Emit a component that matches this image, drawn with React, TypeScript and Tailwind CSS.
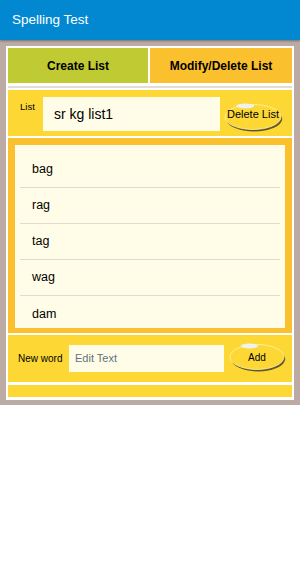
const words = ['bag', 'rag', 'tag', 'wag', 'dam'];

const OvalShape = ({ w, h }: { w: number; h: number }) => (
  <svg
    className="absolute inset-0"
    width={w}
    height={h}
    viewBox={`0 0 ${w} ${h}`}
  >
    <ellipse
      cx={w / 2 + 1.2}
      cy={h / 2 + 2}
      rx={w / 2 - 2}
      ry={h / 2 - 2.5}
      fill="#3d3522"
      opacity="0.8"
    />
    <ellipse
      cx={w / 2}
      cy={h / 2}
      rx={w / 2 - 2}
      ry={h / 2 - 2.5}
      fill="#FDD835"
      stroke="#fff4b0"
      strokeWidth="0.8"
    />
    <ellipse
      cx={w * 0.37}
      cy={4}
      rx={w * 0.15}
      ry={2.6}
      fill="#eef2f5"
      opacity="0.95"
    />
  </svg>
);

export default function App() {
  return (
    <div className="w-[300px] h-[564px] bg-white font-['Liberation_Sans',sans-serif] text-black">
      <header className="h-10 bg-[#0288D1] flex items-center pl-3 shadow-[0_1px_2px_rgba(0,0,0,0.35)] relative">
        <span className="text-white text-[13.5px]">Spelling Test</span>
      </header>

      <div className="bg-[#BCAAA4] px-[6px] pt-[6px] pb-[5px]">
        <div className="bg-white p-[2px] flex flex-col">
          <div className="flex gap-[2px] h-[35px]">
            <div className="w-[140px] bg-[#C0CA33] flex items-center justify-center text-[12px] font-bold">
              Create List
            </div>
            <div className="flex-1 bg-[#FBC02D] flex items-center justify-center text-[12px] font-bold">
              Modify/Delete List
            </div>
          </div>

          <div className="h-[7px] flex items-center">
            <div className="h-[2px] w-full bg-[#e2dddb]" />
          </div>

          <div className="h-[46px] bg-[#FDD835] flex items-start pt-[7px]">
            <span className="ml-3 mt-[5px] w-[23px] text-[9.5px] leading-none">List</span>
            <div className="w-[177px] h-[34px] bg-[#FFFDE7] flex items-center pl-[11px] text-[14px]">
              sr kg list1
            </div>
            <button className="relative ml-[3px] mt-[5px] w-[60px] h-[30px] flex items-center justify-center pb-[6px]">
              <OvalShape w={60} h={30} />
              <span className="relative text-[11px]">Delete List</span>
            </button>
          </div>

          <div className="mt-[2px] bg-[#FBC02D] pt-[7px] px-[7px] pb-[5px]">
            <div className="h-[183px] bg-[#FFFDE7] pt-[7px] overflow-hidden">
              {words.map((word, i) => (
                <div
                  key={word}
                  className={
                    i < words.length - 1
                      ? 'mx-[5px] h-[36px] flex items-center pl-3 text-[12.5px] border-b border-[#e0ddd0]'
                      : 'mx-[5px] h-[36px] flex items-center pl-3 text-[12.5px]'
                  }
                >
                  {word}
                </div>
              ))}
            </div>
          </div>

          <div className="mt-[2px] h-[47px] bg-[#FDD835] flex items-center">
            <span className="ml-[10px] w-[51px] text-[10px]">New word</span>
            <div className="w-[155px] h-[27px] bg-[#FFFDE7] flex items-center pl-[6px] text-[11px] text-[#5f7380]">
              Edit Text
            </div>
            <button className="relative ml-[4px] -mt-[3px] w-[58px] h-[30px] flex items-center justify-center">
              <OvalShape w={58} h={30} />
              <span className="relative text-[10px]">Add</span>
            </button>
          </div>

          <div className="mt-[3px] h-[12px] bg-[#FDD835]" />
          <div className="h-[1px]" />
        </div>
      </div>
    </div>
  );
}
